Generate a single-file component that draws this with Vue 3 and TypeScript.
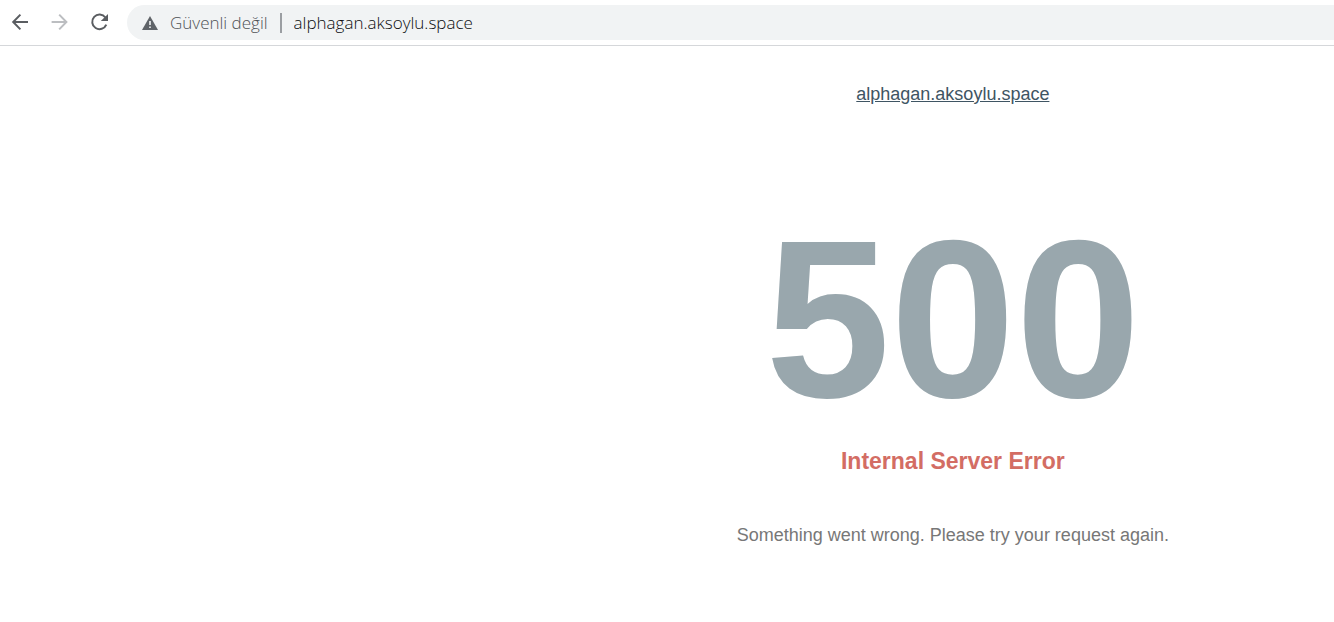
<script setup lang="ts">
const host = 'alphagan.aksoylu.space'
const status = {
  code: '500',
  title: 'Internal Server Error',
  detail: 'Something went wrong. Please try your request again.',
}
</script>

<template>
  <div class="browser">
    <header class="toolbar">
      <nav class="controls" aria-label="Navigation">
        <button type="button" class="control" aria-label="Back">
          <svg viewBox="0 0 20 20" fill="none" stroke="currentColor" stroke-width="2">
            <path d="M18 9H3.4M10.4 1.6 3.2 9l7.2 7.4" />
          </svg>
        </button>
        <button type="button" class="control forward" aria-label="Forward" disabled>
          <svg viewBox="0 0 20 20" fill="none" stroke="currentColor" stroke-width="2">
            <path d="M1.6 9h14.6M9.2 1.6 16.4 9l-7.2 7.4" />
          </svg>
        </button>
        <button type="button" class="control" aria-label="Reload">
          <svg viewBox="0 0 20 20">
            <path d="M15.4 4.5A7.3 7.3 0 1 0 16.3 11.6" fill="none" stroke="currentColor" stroke-width="2" />
            <path d="M18 .9v7.2h-7.2z" fill="currentColor" />
          </svg>
        </button>
      </nav>
      <div class="address">
        <svg class="warning" viewBox="0 0 16 14" aria-hidden="true">
          <path d="M8 0 16 14H0z" fill="#5f6368" />
          <path d="M7.2 5h1.6v4H7.2zM7.2 10.4h1.6V12H7.2z" fill="#f1f3f4" />
        </svg>
        <span class="security">Güvenli değil</span>
        <span class="divider"></span>
        <input class="url" type="text" aria-label="Address" :value="host" spellcheck="false" />
      </div>
    </header>

    <main class="page">
      <section class="message">
        <a class="site" href="#">{{ host }}</a>
        <h1 class="code">{{ status.code }}</h1>
        <h2 class="title">{{ status.title }}</h2>
        <p class="detail">{{ status.detail }}</p>
      </section>
    </main>
  </div>
</template>

<style>
body {
  background: #fff;
}
</style>

<style scoped>
.browser {
  font-family: "Liberation Sans", Arial, sans-serif;
  font-size: 18px;
  overflow: hidden;
}

.toolbar {
  display: flex;
  align-items: center;
  gap: 17px;
  padding: 5px 0 5px 10px;
  border-bottom: 1px solid #d5d7da;
}

.controls {
  display: flex;
  gap: 20px;
}

.control {
  width: 20px;
  height: 20px;
  padding: 0;
  border: 0;
  background: none;
  color: #5a5d61;
}

.control svg {
  display: block;
  width: 20px;
  height: 20px;
}

.forward {
  color: #bcbec1;
}

.address {
  flex: 1;
  display: flex;
  align-items: center;
  height: 35px;
  padding-left: 15px;
  border-radius: 18px 0 0 18px;
  background: #f1f3f4;
  font-family: "Open Sans", "Noto Sans", sans-serif;
  font-size: 17px;
  font-weight: 300;
}

.warning {
  width: 16px;
  height: 14px;
  margin-right: 12px;
}

.security {
  color: #4f5256;
}

.divider {
  width: 2px;
  height: 20px;
  margin: 0 12px;
  background: #9b9ea2;
}

.url {
  flex: 1;
  min-width: 0;
  padding: 0;
  border: 0;
  outline: 0;
  background: none;
  color: #0c0e10;
  font: inherit;
}

.page {
  display: grid;
  grid-template-columns: 3fr 4fr;
}

.message {
  grid-column: 2;
  padding-top: 38px;
  text-align: center;
}

.site {
  color: #3f5563;
  line-height: 20px;
}

.code {
  margin: 86px 0 0;
  color: #99a7ad;
  font-size: 225px;
  font-weight: 700;
  line-height: 256px;
}

.title {
  margin: 0;
  color: #d36d64;
  font-size: 23px;
  line-height: 28px;
}

.detail {
  margin: 50px 0 0;
  color: #777;
  line-height: 20px;
}
</style>
